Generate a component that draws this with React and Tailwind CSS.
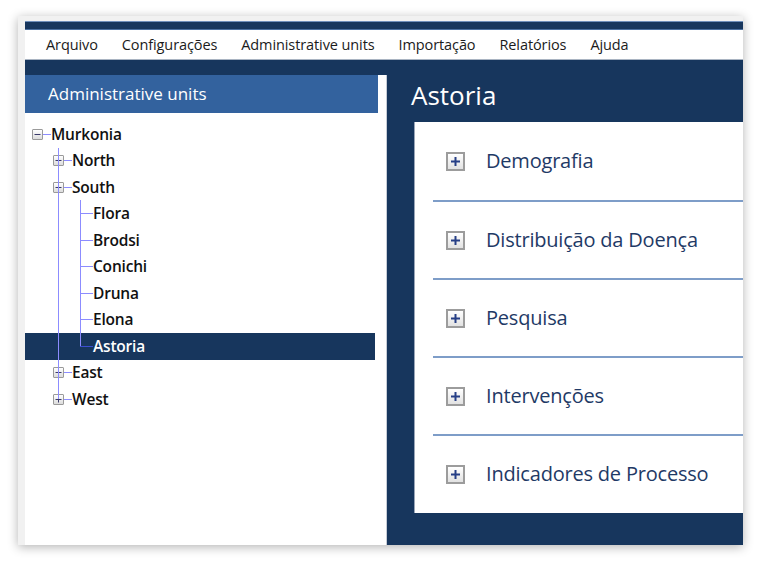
import React from "react";

const menu = ["Arquivo", "Configurações", "Administrative units", "Importação", "Relatórios", "Ajuda"];

const tree = [
  { label: "Murkonia", level: 0, box: "minus" },
  { label: "North", level: 1, box: "plus" },
  { label: "South", level: 1, box: "minus" },
  { label: "Flora", level: 2 },
  { label: "Brodsi", level: 2 },
  { label: "Conichi", level: 2 },
  { label: "Druna", level: 2 },
  { label: "Elona", level: 2 },
  { label: "Astoria", level: 2, selected: true },
  { label: "East", level: 1, box: "plus" },
  { label: "West", level: 1, box: "plus" },
];

const sections = ["Demografia", "Distribuição da Doença", "Pesquisa", "Intervenções", "Indicadores de Processo"];

function Expander({ type }) {
  return (
    <div className="w-[11px] h-[11px] border border-[#9a9a9a] rounded-[1px] bg-gradient-to-b from-white to-[#dcdcdc] flex items-center justify-center shrink-0">
      <svg width="7" height="7" viewBox="0 0 7 7">
        <rect x="0.5" y="3" width="6" height="1" fill="#3a3a6a" />
        {type === "plus" && <rect x="3" y="0.5" width="1" height="6" fill="#3a3a6a" />}
      </svg>
    </div>
  );
}

function TreeRow({ item }) {
  const text = item.selected ? "text-white" : "text-[#111]";
  return (
    <div className={`h-[26.5px] flex items-center ${item.selected ? "bg-[#17365d]" : ""}`}>
      {item.level === 0 && (
        <div className="flex items-center pl-[7px]">
          <Expander type={item.box} />
          <div className="w-[8px] h-px bg-[#8c8cff]" />
        </div>
      )}
      {item.level === 1 && (
        <div className="flex items-center pl-[28px]">
          <Expander type={item.box} />
          <div className="w-[8px] h-px bg-[#8c8cff]" />
        </div>
      )}
      {item.level === 2 && (
        <div className="flex items-center pl-[55px]">
          <div className={`w-[13px] h-px ${item.selected ? "bg-[#3b4fd0]" : "bg-[#8c8cff]"}`} />
        </div>
      )}
      <span className={`text-[15.5px] font-semibold leading-none tracking-[-0.2px] ${text}`}>{item.label}</span>
    </div>
  );
}

function PlusBox() {
  return (
    <div className="w-[19px] h-[19px] border-2 border-[#9c9c9c] bg-gradient-to-b from-white to-[#e2e2e2] flex items-center justify-center shrink-0">
      <svg width="11" height="11" viewBox="0 0 11 11">
        <rect x="1" y="4.5" width="9" height="2" fill="#263f86" />
        <rect x="4.5" y="1" width="2" height="9" fill="#263f86" />
      </svg>
    </div>
  );
}

export default function App() {
  return (
    <div className="w-[761px] h-[561px] bg-white overflow-hidden pt-[16px] pl-[18px] font-['Open_Sans',sans-serif]">
      <div className="w-[725px] h-[529px] bg-[#f1f1f1] pl-[7px] pt-[5px] shadow-[0_2px_10px_rgba(0,0,0,0.3)] flex">
        <div className="flex-1 flex flex-col overflow-hidden">
          <div className="h-[9px] bg-[#17365d] border-t border-[#6f8fbb] border-b border-b-[#4b6f9f]" />
          <div className="h-[30px] bg-white border-b border-[#a9b4c2] flex items-center pl-[21px] gap-[24px] text-[14.5px] font-medium text-[#1b1b1b] tracking-[-0.1px]">
            {menu.map((m) => (
              <span key={m}>{m}</span>
            ))}
          </div>
          <div className="flex-1 bg-[#17365d] flex">
            <div className="mt-[15px] w-[362px] bg-white border-r border-[#c6ccd6] flex flex-col">
              <div className="w-[353px] h-[38px] bg-[#33629e] flex items-center pl-[23px] text-white text-[17px]">
                Administrative units
              </div>
              <div className="relative w-[350px] pt-[8px]">
                <div className="absolute left-[33px] top-[35px] w-px h-[251px] bg-[#8c8cff] z-10" />
                <div className="absolute left-[55px] top-[87px] w-px h-[146px] bg-[#8c8cff] z-10" />
                {tree.map((t) => (
                  <TreeRow key={t.label} item={t} />
                ))}
              </div>
            </div>
            <div className="flex-1 flex flex-col pl-[24px]">
              <div className="h-[62px] pt-[18px] text-white text-[26px] leading-[34px]">Astoria</div>
              <div className="ml-[3px] h-[391px] bg-white border-l border-[#9aa6b8] pl-[18px]">
                {sections.map((s, i) => (
                  <div
                    key={s}
                    className={`h-[78px] flex items-center pl-[13px] gap-[21px] ${i > 0 ? "border-t-2 border-[#7e9dc8]" : ""}`}
                  >
                    <PlusBox />
                    <span className="text-[20px] font-medium text-[#1f3a66] tracking-[-0.2px]">{s}</span>
                  </div>
                ))}
              </div>
            </div>
          </div>
        </div>
      </div>
    </div>
  );
}
